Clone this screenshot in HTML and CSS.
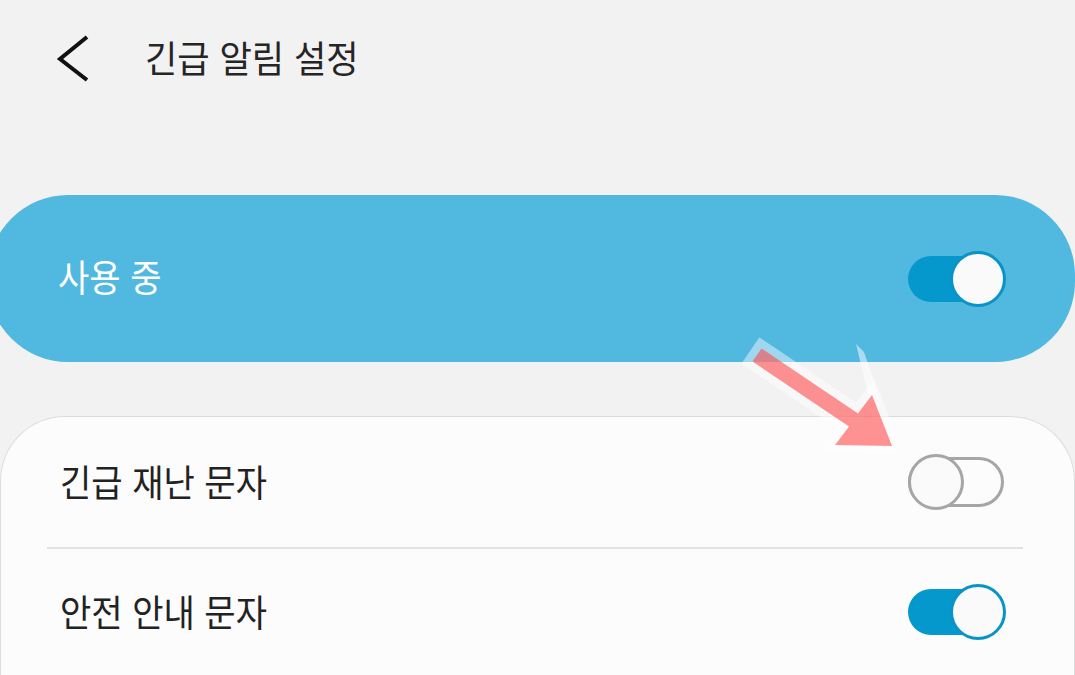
FILE: index.html
```html
<!DOCTYPE html>
<html lang="ko">
<head>
<meta charset="utf-8">
<title>긴급 알림 설정</title>
<link rel="stylesheet" href="styles.css">
</head>
<body>
<div class="screen">
  <header class="header">
    <svg class="back" width="40" height="50" viewBox="0 0 40 50">
      <polyline points="32,4 5,26 32,47" fill="none" stroke="#111" stroke-width="4" stroke-linejoin="miter" stroke-linecap="butt"/>
    </svg>
    <h1 class="title"><span class="sq">긴급 알림 설정</span></h1>
  </header>

  <section class="master">
    <span class="master-label sq">사용 중</span>
    <span class="switch on"><span class="thumb"></span></span>
  </section>

  <section class="card">
    <div class="row">
      <span class="row-label sq">긴급 재난 문자</span>
      <span class="switch off"><span class="thumb"></span></span>
    </div>
    <div class="divider"></div>
    <div class="row row2">
      <span class="row-label sq">안전 안내 문자</span>
      <span class="switch on light"><span class="thumb"></span></span>
    </div>
  </section>

  <svg class="arrow" width="1075" height="675" viewBox="0 0 1075 675">
    <polygon points="761.5,348.4 858,413.4 872,395 892,446 835,445 849,426.6 752.5,361.6" fill="none" stroke="#ffffff" stroke-opacity="0.45" stroke-width="16" stroke-linejoin="miter"/>
    <polygon points="856,344 864,352 880,398 870,402" fill="#ffffff" fill-opacity="0.5"/>
    <polygon points="761.5,348.4 858,413.4 872,395 892,446 835,445 849,426.6 752.5,361.6" fill="#ff4a4a" fill-opacity="0.6"/>
  </svg>
</div>
</body>
</html>
```

FILE: styles.css
```css
html, body {
  margin: 0;
  padding: 0;
}
body {
  background: #f2f2f2;
  font-family: "Noto Sans CJK KR", "Noto Sans", sans-serif;
}
.screen {
  position: relative;
  width: 1075px;
  height: 675px;
  overflow: hidden;
  background: #f2f2f2;
}
.sq {
  display: inline-block;
  transform: scaleX(0.92);
  transform-origin: left center;
  white-space: nowrap;
}
.header {
  height: 118px;
  display: flex;
  align-items: center;
  padding-left: 55px;
  box-sizing: border-box;
}
.back {
  display: block;
  margin-top: -2px;
}
.title {
  margin: 0 0 0 50px;
  font-size: 37px;
  font-weight: 400;
  color: #252525;
  line-height: 1;
  margin-top: -4px;
}
.title .sq {
  transform: scaleX(0.95);
}
.master {
  margin-top: 77px;
  margin-left: -12px;
  width: 1087px;
  height: 167px;
  box-sizing: border-box;
  border-radius: 80px;
  background: #51b8e0;
  display: flex;
  align-items: center;
  justify-content: space-between;
  padding: 0 71px 0 70px;
}
.master-label {
  color: #ffffff;
  font-size: 37px;
  line-height: 1;
  margin-top: -4px;
}
.switch {
  position: relative;
  display: block;
  width: 96px;
  height: 46px;
  border-radius: 23px;
  box-sizing: border-box;
}
.switch.on {
  background: #0498cc;
}
.switch.off {
  border: 3px solid #a6a6a6;
  height: 50px;
  border-radius: 25px;
}
.thumb {
  position: absolute;
  top: 50%;
  width: 56px;
  height: 56px;
  margin-top: -28px;
  border-radius: 50%;
  box-sizing: border-box;
  background: #fafafa;
}
.switch.on .thumb {
  right: -2px;
  border: 3px solid #0a93c6;
}
.switch.off .thumb {
  left: -3px;
  border: 3px solid #a6a6a6;
}
.card {
  margin-top: 54px;
  background: #fcfcfc;
  border: 1px solid #dcdcdc;
  border-bottom: none;
  border-radius: 65px 65px 0 0;
  height: 300px;
  box-sizing: border-box;
}
.row {
  height: 130px;
  display: flex;
  align-items: center;
  justify-content: space-between;
  padding: 0 70px 0 59px;
}
.row2 {
  height: 126px;
}
.row-label {
  font-size: 37px;
  color: #222222;
  line-height: 1;
  margin-top: -2px;
}
.divider {
  height: 2px;
  background: #e2e2e2;
  margin: 0 51px 0 46px;
}
.arrow {
  position: absolute;
  left: 0;
  top: 0;
  pointer-events: none;
}
```
